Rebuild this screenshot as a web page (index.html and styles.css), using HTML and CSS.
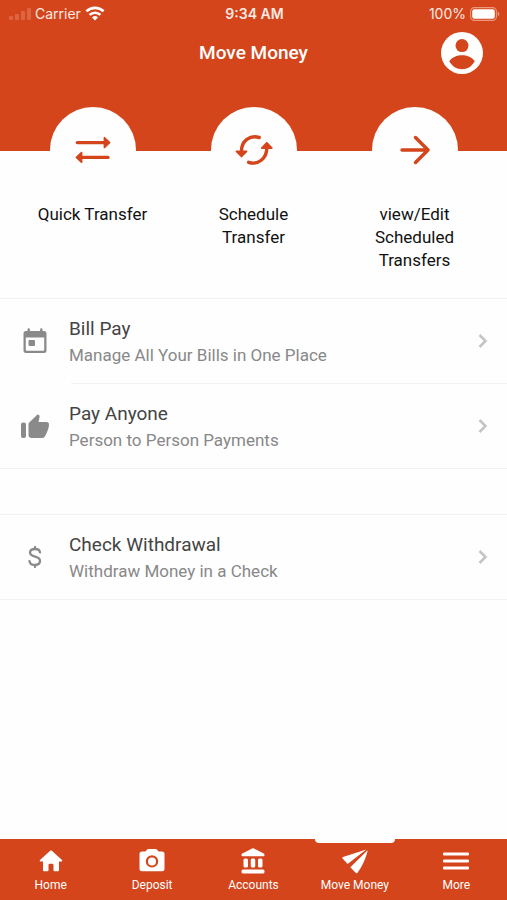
FILE: index.html
```html
<!DOCTYPE html>
<html lang="en">
<head>
<meta charset="utf-8">
<meta name="viewport" content="width=device-width, initial-scale=1">
<title>Move Money</title>
<link rel="stylesheet" href="styles.css">
</head>
<body>
<header class="header">
  <div class="status">
    <div class="status-side">
      <svg class="signal" width="22" height="14" viewBox="0 0 22 14" aria-hidden="true"><rect x="0" y="9" width="4" height="4" rx="1"/><rect x="6" y="7" width="4" height="6" rx="1"/><rect x="12" y="4" width="4" height="9" rx="1"/><rect x="18" y="1" width="4" height="12" rx="1"/></svg>
      <span>Carrier</span>
      <svg width="20" height="15" viewBox="0 0 20 15" fill="none" stroke="#fff" stroke-width="2.6" aria-hidden="true"><path d="M1.400 5.300a12.400 12.400 0 0 1 17.200 0M4.600 8.900a7.800 7.800 0 0 1 10.800 0"/><path d="M10 14.600l-3-3.200a4.400 4.400 0 0 1 6 0z" fill="#fff" stroke="none"/></svg>
    </div>
    <span class="time">9:34 AM</span>
    <div class="status-side status-end">
      <span>100%</span>
      <svg width="30" height="14" viewBox="0 0 30 14" aria-hidden="true"><rect x=".6" y=".6" width="25.8" height="12.8" rx="3.8" fill="none" stroke="#eb9a80" stroke-width="1.1"/><rect x="2.2" y="2.2" width="22.6" height="9.6" rx="2.2" fill="#fff"/><path d="M27.800 4.600c2 .8 2 4 0 4.800z" fill="#eb9a80"/></svg>
    </div>
  </div>
  <div class="titlebar">
    <h1>Move Money</h1>
    <button class="profile" type="button" aria-label="Profile">
      <svg width="42" height="42" viewBox="0 0 42 42" aria-hidden="true"><circle cx="21" cy="21" r="21" fill="#fff"/><circle cx="21" cy="13.600" r="6.500" fill="#d4451c"/><path d="M8.300 29.300C11 25 16.200 23.300 21 23.300s10 1.700 12.700 6c-2.700 5-7.300 8-12.700 8s-10-3-12.700-8z" fill="#d4451c"/></svg>
    </button>
  </div>
</header>
<main>
  <section class="actions">
    <button class="action" type="button">
      <span class="disc"><svg width="36" height="28" viewBox="0 0 36 28" fill="#d4451c" stroke="#d4451c" stroke-linecap="round" stroke-linejoin="round" aria-hidden="true"><path d="M2.300 6.600H30M7 21.400h26" stroke-width="3.400"/><path d="M29.500 1.800v9.600l5-4.800zM6.500 16.600v9.600l-5-4.800z" stroke-width="1.800"/></svg></span>
      <span>Quick Transfer</span>
    </button>
    <button class="action" type="button">
      <span class="disc"><svg width="38" height="30" viewBox="0 0 38 30" fill="none" stroke="#d4451c" stroke-linecap="round" stroke-linejoin="round" aria-hidden="true"><path d="M24.200 2.500C15 -.3 6.500 6 6.500 16M13.600 27.300C23 30.500 31.800 23.500 31.800 13" stroke-width="3.400"/><path d="M1.500 16.300h10L6.500 21.500zM26.800 13h10l-5-5.200z" fill="#d4451c" stroke-width="1.800"/></svg></span>
      <span>Schedule<br>Transfer</span>
    </button>
    <button class="action" type="button">
      <span class="disc"><svg width="30" height="30" viewBox="0 0 30 30" fill="none" stroke="#d4451c" stroke-width="3.400" stroke-linecap="round" stroke-linejoin="round" aria-hidden="true"><path d="M2 15h25M15.500 2.500L28 15 15.500 27.500"/></svg></span>
      <span>view/Edit<br>Scheduled<br>Transfers</span>
    </button>
  </section>
  <nav class="list" aria-label="Payments">
    <a class="row" href="#bill-pay">
      <span class="row-icon"><svg width="24" height="26" viewBox="0 0 24 26" aria-hidden="true"><path fill-rule="evenodd" d="M4.500 1.500a1.200 1.200 0 0 1 2.400 0V3h10.200V1.500a1.200 1.200 0 0 1 2.400 0V3H21a2.500 2.500 0 0 1 2.500 2.500V22.500a2.500 2.500 0 0 1-2.500 2.500H3A2.500 2.500 0 0 1 .5 22.500V5.500A2.500 2.500 0 0 1 3 3h1.500zM2.800 9.500v12.200a1 1 0 0 0 1 1h16.400a1 1 0 0 0 1-1v-12.200z"/><rect x="5.500" y="12" width="6.500" height="6" rx="1"/></svg></span>
      <span class="row-text"><span class="row-title">Bill Pay</span><span class="row-sub">Manage All Your Bills in One Place</span></span>
      <svg class="chevron" width="10" height="16" viewBox="0 0 10 16" aria-hidden="true"><path d="M1.500 2l6 6-6 6"/></svg>
    </a>
    <a class="row" href="#pay-anyone">
      <span class="row-icon"><svg width="28" height="24" viewBox="0 0 28 24" aria-hidden="true"><rect x="0" y="8.500" width="5" height="15.500" rx="2"/><path d="M7.500 10.500c0-1 .3-1.500 1-2.200L16.500.5c1 0 2.300.9 2.100 2.300L17.500 8h8c1.600 0 2.500 1.200 2.500 2.600 0 3.600-2 8-3.800 11.400-.7 1.300-1.700 2-3.100 2H10.500c-1.600 0-3-1.300-3-3z"/></svg></span>
      <span class="row-text"><span class="row-title">Pay Anyone</span><span class="row-sub">Person to Person Payments</span></span>
      <svg class="chevron" width="10" height="16" viewBox="0 0 10 16" aria-hidden="true"><path d="M1.500 2l6 6-6 6"/></svg>
    </a>
  </nav>
  <nav class="list" aria-label="Withdrawals">
    <a class="row" href="#check-withdrawal">
      <span class="row-icon"><svg width="14" height="22" viewBox="0 0 14 22" aria-hidden="true"><path d="M12 6.300C11.700 3.900 9.700 3 7 3 4 3 2 4.300 2 6.600c0 5.400 10 2.800 10 8.200 0 2.700-2.100 4.200-5 4.200s-5.200-1.200-5.500-3.900M7 1v2m0 16v2" fill="none" stroke="#8a8a8a" stroke-width="2.300" stroke-linecap="round"/></svg></span>
      <span class="row-text"><span class="row-title">Check Withdrawal</span><span class="row-sub">Withdraw Money in a Check</span></span>
      <svg class="chevron" width="10" height="16" viewBox="0 0 10 16" aria-hidden="true"><path d="M1.500 2l6 6-6 6"/></svg>
    </a>
  </nav>
</main>
<nav class="tabs" aria-label="Main">
  <a class="tab" href="#home"><svg width="26" height="26" viewBox="0 0 26 26" aria-hidden="true"><path d="M13 2.500c.4 0 .8.200 1.100.4L24 12c.6.500.3 1.400-.5 1.400H21V22c0 .8-.5 1.300-1.300 1.300h-3.200c-.6 0-1-.4-1-1V17a1.200 1.200 0 0 0-1.200-1.200h-2.600A1.200 1.200 0 0 0 10.500 17v5.300c0 .6-.4 1-1 1H6.300C5.500 23.300 5 22.800 5 22v-8.600H2.500c-.8 0-1.100-.9-.5-1.400l9.900-9.100c.3-.2.700-.4 1.100-.4z"/></svg>Home</a>
  <a class="tab" href="#deposit"><svg width="26" height="26" viewBox="0 0 26 26" aria-hidden="true"><path fill-rule="evenodd" d="M9.500 1h7c.6 0 1 .2 1.400.6L19.600 3.500h3.400A2.500 2.500 0 0 1 25.500 6v14.800a2.500 2.500 0 0 1-2.500 2.500H3A2.500 2.500 0 0 1 .5 20.800V6A2.500 2.500 0 0 1 3 3.500h3.400l1.700-1.900C8.500 1.200 8.900 1 9.500 1zM13 7.200a6.200 6.200 0 1 0 0 12.400 6.200 6.200 0 0 0 0-12.400zm0 2.200a4 4 0 1 1 0 8 4 4 0 0 1 0-8z"/></svg>Deposit</a>
  <a class="tab" href="#accounts"><svg width="26" height="26" viewBox="0 0 26 26" aria-hidden="true"><path d="M12.200.4c.5-.3 1.100-.3 1.600 0L23.700 5.600c1.400.8.900 2.700-.7 2.700H3C1.400 8.300.9 6.400 2.300 5.600z"/><rect x="3.500" y="10.500" width="4.500" height="9" rx="1.500"/><rect x="10.750" y="10.500" width="4.500" height="9" rx="1.500"/><rect x="18" y="10.500" width="4.500" height="9" rx="1.500"/><rect x="1.500" y="21.500" width="23" height="4" rx="1.500"/></svg>Accounts</a>
  <a class="tab tab-active" href="#move-money" aria-current="page"><svg width="26" height="26" viewBox="0 0 26 26" aria-hidden="true"><path d="M24.300 1.600L1 9c-.8.300-.9.900-.4 1.500l5 5.400zM25.600 2.200c-.5 5-5.500 16.700-10.100 22.500-.5.700-1.200.6-1.800.1L8.300 19.200z"/></svg>Move Money</a>
  <a class="tab" href="#more"><svg width="26" height="26" viewBox="0 0 26 26" aria-hidden="true"><rect y="4.500" width="26" height="3" rx="1"/><rect y="11.500" width="26" height="3" rx="1"/><rect y="18.500" width="26" height="3" rx="1"/></svg>More</a>
</nav>
</body>
</html>
```
FILE: styles.css
```css
* {
  box-sizing: border-box;
}

body {
  margin: 0;
  min-height: 100vh;
  display: flex;
  flex-direction: column;
  background: #fefefe;
  color: #111;
  font-family: Roboto, "Liberation Sans", sans-serif;
}

svg {
  display: block;
  flex: none;
}

button {
  border: 0;
  padding: 0;
  background: none;
  font: inherit;
  color: inherit;
  cursor: pointer;
}

a {
  color: inherit;
  text-decoration: none;
}

.header {
  height: 151px;
  background: #d4451c;
  color: #fff;
}

.status {
  display: grid;
  grid-template-columns: 1fr auto 1fr;
  align-items: center;
  height: 27px;
  padding: 0 7px 0 9px;
  font-family: Inter, Roboto, sans-serif;
  font-size: 14px;
  color: #fde9e2;
}

.status-side {
  display: flex;
  align-items: center;
  gap: 4px;
}

.status-end {
  justify-content: flex-end;
}

.signal {
  fill: #de6541;
}

.time {
  font-weight: 600;
}

.titlebar {
  display: grid;
  grid-template-columns: 1fr auto 1fr;
  align-items: center;
  height: 51px;
  padding: 0 24px;
}

.titlebar h1 {
  grid-column: 2;
  margin: 0;
  font-size: 19px;
  font-weight: 500;
}

.profile {
  justify-self: end;
}

main {
  flex: 1;
}

.actions {
  display: grid;
  grid-template-columns: repeat(3, 1fr);
  margin-top: -44px;
  padding: 0 12px 26px;
}

.action {
  display: flex;
  flex-direction: column;
  align-items: center;
  gap: 10px;
  font-size: 17px;
  line-height: 23px;
}

.disc {
  display: grid;
  place-items: center;
  width: 86px;
  height: 86px;
  border-radius: 50%;
  background: #fefefe;
}

.list {
  margin-bottom: 45px;
  border-top: 1px solid #f2f2f2;
  border-bottom: 1px solid #f2f2f2;
}

.row {
  display: flex;
  align-items: center;
  height: 84px;
  padding-right: 19px;
}

.row + .row {
  height: 85px;
  border-top: 1px solid #f2f2f2;
  border-image: linear-gradient(to right, transparent 72px, #f2f2f2 72px) 1;
}

.row-icon {
  display: grid;
  place-items: center;
  width: 69px;
  fill: #8a8a8a;
}

.row-text {
  flex: 1;
  display: flex;
  flex-direction: column;
  padding-top: 2px;
}

.row-title {
  font-size: 19px;
  line-height: 26px;
  color: #444;
}

.row-sub {
  font-size: 17px;
  line-height: 26px;
  color: #888;
}

.chevron {
  fill: none;
  stroke: #c4c4c4;
  stroke-width: 2.5;
}

.tabs {
  display: grid;
  grid-template-columns: repeat(5, 1fr);
  height: 61px;
  background: #d4451c;
  color: #fff;
  fill: #fff;
}

.tab {
  position: relative;
  display: flex;
  flex-direction: column;
  align-items: center;
  gap: 3px;
  padding-top: 9px;
  font-size: 12px;
  line-height: 16px;
}

.tab-active::before {
  content: "";
  position: absolute;
  top: 0;
  left: 11px;
  right: 11px;
  height: 4px;
  border-radius: 0 0 4px 4px;
  background: #fefefe;
}
```
